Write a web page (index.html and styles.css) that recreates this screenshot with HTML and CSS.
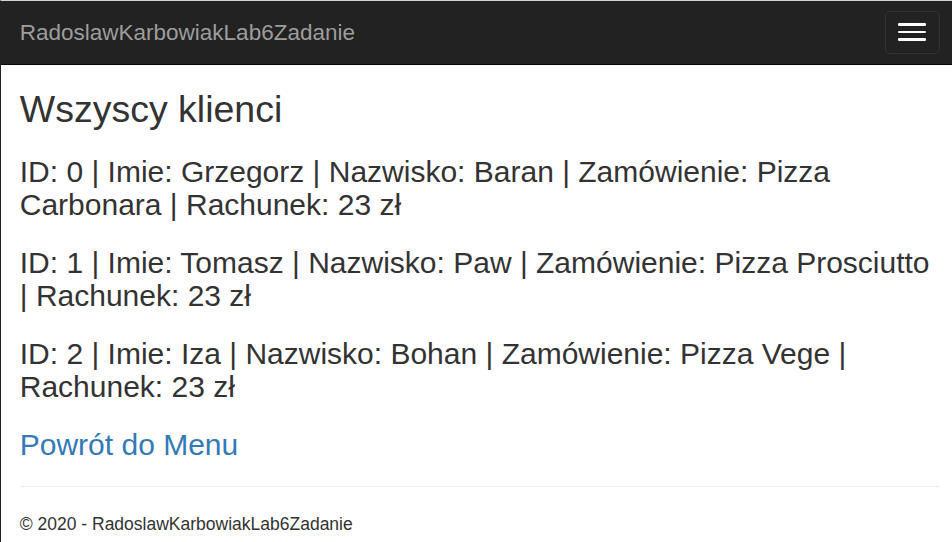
FILE: index.html
```html
<!DOCTYPE html>
<html lang="pl">
<head>
<meta charset="utf-8">
<title>Wszyscy klienci - RadoslawKarbowiakLab6Zadanie</title>
<link rel="stylesheet" href="styles.css">
</head>
<body>
<div class="frame">
  <nav class="navbar">
    <a class="brand" href="#">RadoslawKarbowiakLab6Zadanie</a>
    <button class="toggle" type="button" aria-label="Toggle navigation">
      <span class="bar"></span>
      <span class="bar"></span>
      <span class="bar"></span>
    </button>
  </nav>
  <main class="content">
    <h2 class="title">Wszyscy klienci</h2>
    <h3 class="entry">ID: 0 | Imie: Grzegorz | Nazwisko: Baran | Zamówienie: Pizza Carbonara | Rachunek: 23 zł</h3>
    <h3 class="entry">ID: 1 | Imie: Tomasz | Nazwisko: Paw | Zamówienie: Pizza Prosciutto | Rachunek: 23 zł</h3>
    <h3 class="entry">ID: 2 | Imie: Iza | Nazwisko: Bohan | Zamówienie: Pizza Vege | Rachunek: 23 zł</h3>
    <h3 class="entry"><a class="link" href="#">Powrót do Menu</a></h3>
    <hr class="divider">
    <footer class="footer">
      <p class="copy">© 2020 - RadoslawKarbowiakLab6Zadanie</p>
    </footer>
  </main>
</div>
</body>
</html>
```

FILE: styles.css
```css
* { box-sizing: border-box; }

html, body {
  margin: 0;
  padding: 0;
  background: #fff;
}

body {
  font-family: "Liberation Sans", Arial, Helvetica, sans-serif;
  font-size: 17.5px;
  line-height: 25px;
  color: #333;
}

.frame {
  min-height: 542px;
  border-top: 1px solid #d2d2d2;
  border-left: 1px solid #222;
}

.navbar {
  display: flex;
  justify-content: space-between;
  align-items: flex-start;
  height: 63.75px;
  background: #222;
  border-bottom: 1px solid #080808;
  padding: 0 12.3px 0 0;
}

.brand {
  display: block;
  padding: 18.75px;
  font-size: 22.5px;
  line-height: 25px;
  color: #9d9d9d;
  text-decoration: none;
}

.toggle {
  display: flex;
  flex-direction: column;
  gap: 5px;
  margin-top: 10px;
  width: 55px;
  height: 42.5px;
  padding: 11.25px 12.5px;
  background: transparent;
  border: 1px solid #333;
  border-radius: 5px;
  cursor: pointer;
}

.bar {
  display: block;
  width: 27.5px;
  height: 2.5px;
  background: #fff;
  border-radius: 1.25px;
}

.content {
  padding: 0 12px 0 18.75px;
}

.title {
  margin: 23.75px 0 12.5px;
  font-size: 37.5px;
  line-height: 1.1;
  font-weight: 500;
}

.entry {
  margin: 25px 0 12.5px;
  font-size: 30px;
  line-height: 1.1;
  font-weight: 500;
}

.link {
  color: #337ab7;
  text-decoration: none;
}

.divider {
  margin: 25px 0;
  border: 0;
  border-top: 1px solid #eee;
  height: 0;
}

.copy {
  margin: 0 0 12.5px;
}
```
